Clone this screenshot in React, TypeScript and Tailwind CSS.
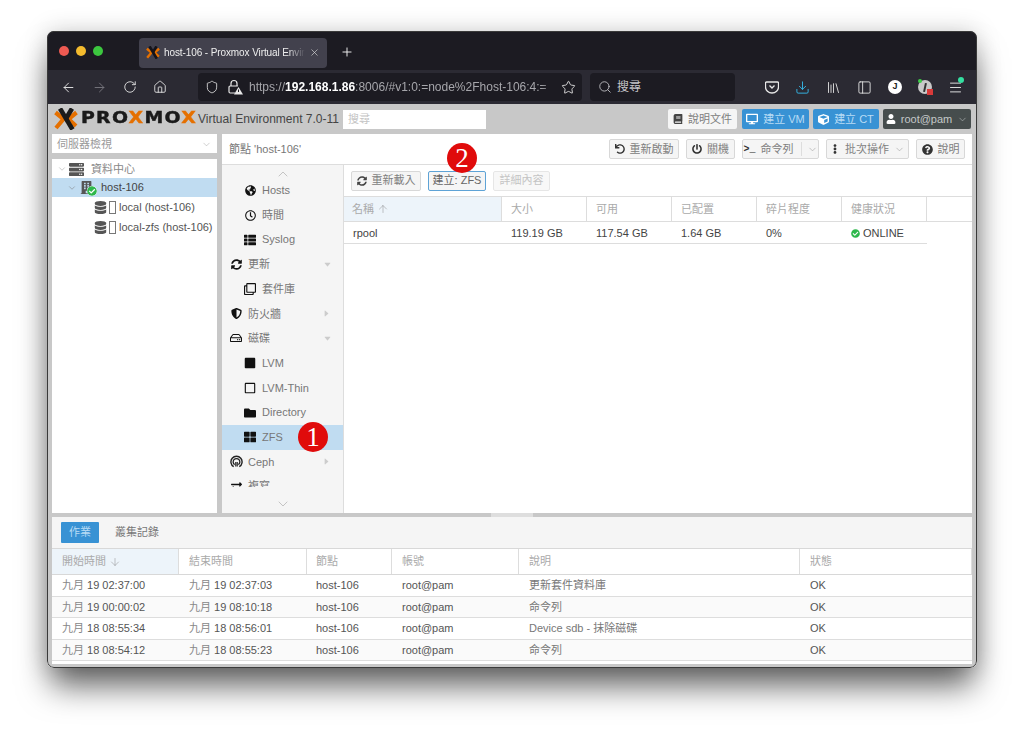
import React from "react";
import { ArrowDown, ArrowLeft, ArrowRight, ArrowUp, ChevronDown, ChevronUp, Download, Home, Library, Menu, PanelLeft, Plus, RotateCw, Search, Shield, Star, X } from "lucide-react";
import {
  FaBook, FaCheckCircle, FaCube, FaDatabase, FaDesktop, FaEllipsisV, FaExchangeAlt, FaFolder, FaGlobeAmericas, FaPowerOff, FaQuestionCircle,
  FaRegClock, FaRegClone, FaRegHdd, FaRegSquare, FaServer, FaShieldAlt, FaSquare, FaSyncAlt, FaThLarge, FaThList, FaUndo, FaUser, FaBuilding,
} from "react-icons/fa";
import { IoCaretDown, IoCaretForward } from "react-icons/io5";

const ProxLogoX = ({ w, h, dark }: { w: number; h: number; dark: string }) => (
  <svg width={w} height={h} viewBox="0 0 24 22" fill="none" className="shrink-0">
    <path d="M1.5 4.5 9.5 11 2 20" stroke="#e57000" strokeWidth="4.2" />
    <path d="M22.5 4.5 14.5 11 22 18" stroke="#e57000" strokeWidth="4.2" />
    <path d="M6 0.5 18.5 21.5" stroke={dark} strokeWidth="4.6" />
    <path d="M18 0.5 12 10.5" stroke={dark} strokeWidth="4.6" />
  </svg>
);

const CephIcon = () => (
  <svg width="13" height="13" viewBox="0 0 14 14" fill="none" stroke="#222" className="shrink-0">
    <path d="M4 12.6A6 6 0 1 1 10 12.6" strokeWidth="1.5" />
    <path d="M5 10.4A3.6 3.6 0 1 1 9 10.4" strokeWidth="1.4" />
    <path d="M6.2 12.5V7.5M7.8 12.5V7.5" strokeWidth="1.2" />
  </svg>
);

const LockWarn = () => (
  <svg width="16" height="16" viewBox="0 0 16 16" fill="none" className="shrink-0">
    <path d="M4 7V4.5a3 3 0 0 1 6 0V7" stroke="#e8e8e8" strokeWidth="1.2" />
    <path d="M8 14H3.2A1.2 1.2 0 0 1 2 12.8V8.2A1.2 1.2 0 0 1 3.2 7h7.6" stroke="#e8e8e8" strokeWidth="1.2" />
    <path d="M11.5 8 16 15.5H7z" fill="#e8e8e8" />
    <path d="M11.5 10.5v2.5" stroke="#1c1b22" strokeWidth="1" />
  </svg>
);

const Marker = ({ n, className }: { n: string; className: string }) => (
  <div className={`absolute w-[30px] h-[30px] rounded-full bg-[#e00b0b] text-white flex items-center justify-center font-['Liberation_Serif',serif] text-[27px] leading-none z-10 ${className}`}>
    {n}
  </div>
);

const ToolBtn = ({ icon, label, w, chevron, split, disabled, focused }: { icon?: React.ReactNode; label: string; w: string; chevron?: boolean; split?: boolean; disabled?: boolean; focused?: boolean }) => (
  <button className={`${w} h-[20px] flex items-center justify-center gap-[5px] rounded-[2px] border text-[11px] ${focused ? "border-[#5ea3d6] bg-[#f5f5f5] text-[#666]" : disabled ? "border-[#e6e6e6] bg-[#f8f8f8] text-[#c4c4c4]" : "border-[#d8d8d8] bg-[#f5f5f5] text-[#808080]"}`}>
    {icon}
    <span>{label}</span>
    {split && <span className="h-[14px] w-px bg-[#ddd] ml-[2px]" />}
    {chevron && <ChevronDown size={11} strokeWidth={1.2} className="text-[#999]" />}
  </button>
);

const navItems: { icon: React.ReactNode; label: string; sub?: boolean; caret?: "down" | "right"; active?: boolean }[] = [
  { icon: <FaGlobeAmericas size={11} />, label: "Hosts", sub: true },
  { icon: <FaRegClock size={11} />, label: "時間", sub: true },
  { icon: <FaThList size={12} />, label: "Syslog", sub: true },
  { icon: <FaSyncAlt size={11} />, label: "更新", caret: "down" },
  { icon: <FaRegClone size={12} />, label: "套件庫", sub: true },
  { icon: <FaShieldAlt size={11} />, label: "防火牆", caret: "right" },
  { icon: <FaRegHdd size={12} />, label: "磁碟", caret: "down" },
  { icon: <FaSquare size={12} />, label: "LVM", sub: true },
  { icon: <FaRegSquare size={12} />, label: "LVM-Thin", sub: true },
  { icon: <FaFolder size={12} />, label: "Directory", sub: true },
  { icon: <FaThLarge size={12} />, label: "ZFS", sub: true, active: true },
  { icon: <CephIcon />, label: "Ceph", caret: "right" },
  { icon: <FaExchangeAlt size={11} />, label: "複寫" },
];

const diskCols = [
  { label: "名稱", value: "rpool", w: "w-[158px]", pl: "pl-[8px]", sorted: true },
  { label: "大小", value: "119.19 GB", w: "w-[85px]", pl: "pl-[9px]" },
  { label: "可用", value: "117.54 GB", w: "w-[85px]", pl: "pl-[9px]" },
  { label: "已配置", value: "1.64 GB", w: "w-[85px]", pl: "pl-[9px]" },
  { label: "碎片程度", value: "0%", w: "w-[85px]", pl: "pl-[9px]" },
  { label: "健康狀況", value: "ONLINE", w: "w-[85px]", pl: "pl-[9px]" },
];

const taskCols = [
  { label: "開始時間", w: "w-[127px]", pl: "pl-[10px]", sorted: true },
  { label: "結束時間", w: "w-[128px]", pl: "pl-[10px]" },
  { label: "節點", w: "w-[85px]", pl: "pl-[9px]" },
  { label: "帳號", w: "w-[127px]", pl: "pl-[10px]" },
  { label: "說明", w: "w-[281px]", pl: "pl-[10px]" },
  { label: "狀態", w: "flex-1", pl: "pl-[10px]" },
];

const tasks = [
  ["九月 19 02:37:00", "九月 19 02:37:03", "host-106", "root@pam", "更新套件資料庫", "OK"],
  ["九月 19 00:00:02", "九月 19 08:10:18", "host-106", "root@pam", "命令列", "OK"],
  ["九月 18 08:55:34", "九月 18 08:56:01", "host-106", "root@pam", "Device sdb - 抹除磁碟", "OK"],
  ["九月 18 08:54:12", "九月 18 08:55:23", "host-106", "root@pam", "命令列", "OK"],
];

export default function App() {
  return (
    <div className="w-[1024px] h-[731px] overflow-hidden bg-white pt-[31px] pl-[47px] font-['Liberation_Sans','Noto_Sans_CJK_TC',sans-serif] text-[11px] text-[#555]">
      <div className="relative w-[930px] h-[637px] flex flex-col rounded-[7px] overflow-hidden shadow-[0_22px_32px_-4px_rgba(0,0,0,0.6),0_0_24px_rgba(0,0,0,0.18)]">
        {/* tab strip */}
        <div className="h-[39px] shrink-0 bg-[#1c1b22] flex items-center text-[#f5f5f5]">
          <div className="flex gap-[7px] pl-[12px] w-[92px]">
            <span className="w-[10px] h-[10px] rounded-full bg-[#ee5a52]" />
            <span className="w-[10px] h-[10px] rounded-full bg-[#f4bb2e]" />
            <span className="w-[10px] h-[10px] rounded-full bg-[#3cc73f]" />
          </div>
          <div className="w-[188px] h-[30px] mt-[4px] rounded-[4px] bg-[#42414d] flex items-center pl-[7px] gap-[4px]">
            <ProxLogoX w={14} h={13} dark="#15141a" />
            <span className="w-[141px] pb-[1px] overflow-hidden whitespace-nowrap text-[10px] tracking-[-0.1px] text-[#eee] [mask-image:linear-gradient(to_right,black_88%,transparent)]">host-106 - Proxmox Virtual Environment</span>
            <X size={11} strokeWidth={1.4} className="text-[#ddd]" />
          </div>
          <Plus size={14} strokeWidth={1.6} className="ml-[13px] mt-[2px]" />
        </div>
        {/* url bar */}
        <div className="h-[34px] shrink-0 bg-[#2b2a33] flex items-center text-[#e8e8e8] pl-[14px]">
          <div className="flex items-center gap-[16px] w-[137px]">
            <ArrowLeft size={15} strokeWidth={1.5} />
            <ArrowRight size={15} strokeWidth={1.5} className="text-[#77767e]" />
            <RotateCw size={14} strokeWidth={1.5} />
            <Home size={14} strokeWidth={1.5} />
          </div>
          <div className="w-[384px] h-[28px] rounded-[4px] bg-[#1c1b22] flex items-center pl-[7px] pr-[6px]">
            <Shield size={14} strokeWidth={1.4} />
            <div className="ml-[8px]"><LockWarn /></div>
            <div className="ml-[6px] w-[310px] overflow-hidden whitespace-nowrap text-[12px] text-[#a6a6ab] [mask-image:linear-gradient(to_right,black_94%,transparent)]">
              https://<span className="text-white font-bold">192.168.1.86</span>:8006/#v1:0:=node%2Fhost-106:4:=
            </div>
            <Star size={15} strokeWidth={1.4} className="ml-auto" />
          </div>
          <div className="ml-[8px] w-[145px] h-[28px] rounded-[4px] bg-[#1c1b22] flex items-center pl-[8px] gap-[5px] text-[12px] text-[#c4c4c8]">
            <Search size={14} strokeWidth={1.5} />
            <span>搜尋</span>
          </div>
          <div className="ml-[30px] flex items-center gap-[16px]">
            <svg width="14" height="14" viewBox="0 0 14 14" fill="none" stroke="#e8e8e8" strokeWidth="1.3"><path d="M1.5 2h11a1 1 0 0 1 1 1v4a6.5 6 0 0 1-13 0V3a1 1 0 0 1 1-1z" /><path d="M4.5 5.5 7 8l2.5-2.5" /></svg>
            <Download size={15} strokeWidth={1.5} className="text-[#35b8e8]" />
            <Library size={15} strokeWidth={1.4} />
            <PanelLeft size={15} strokeWidth={1.4} />
            <span className="w-[14px] h-[14px] rounded-full bg-white text-[#222] text-[9px] font-bold flex items-center justify-center">J</span>
            <div className="relative w-[14px] h-[14px] rounded-full bg-[#c9c9c9] flex justify-center">
              <span className="w-[2px] h-[9px] mt-[3px] bg-[#333] rotate-12" />
              <span className="absolute -top-[1px] left-0 w-[4px] h-[4px] rounded-full bg-[#3ecf4a]" />
              <span className="absolute -bottom-[1px] -right-[1px] w-[6px] h-[6px] bg-[#d93a3a]" />
            </div>
            <div className="relative">
              <Menu size={15} strokeWidth={1.5} />
              <span className="absolute -top-[3px] -right-[1px] w-[6px] h-[6px] rounded-full bg-[#34e0a1]" />
            </div>
          </div>
        </div>

        {/* proxmox page */}
        <div className="flex-1 min-h-0 flex flex-col bg-[#c8c8c8]">
          <div className="h-[30px] shrink-0 flex items-center pl-[7px] pr-[6px]">
            <ProxLogoX w={24} h={22} dark="#1a1a1a" />
            <div className="ml-[3px] w-[117px] whitespace-nowrap overflow-visible">
              <span className="inline-block origin-left scale-x-[1.26] font-['DejaVu_Sans',sans-serif] font-bold text-[15px] tracking-[1px] text-[#1a1a1a] leading-none [-webkit-text-stroke:0.4px]">
                PRO<span className="text-[#e57000]">X</span>MO<span className="text-[#e57000]">X</span>
              </span>
            </div>
            <span className="text-[12px] text-[#444] w-[145px] whitespace-nowrap">Virtual Environment 7.0-11</span>
            <div className="w-[143px] h-[19px] bg-white text-[#c4c4c4] pl-[5px] leading-[19px]">搜尋</div>
            <div className="ml-auto flex items-center gap-[4px]">
              <div className="w-[69px] h-[20px] bg-[#f5f5f5] rounded-[2px] flex items-center justify-center gap-[5px] text-[#808080] mr-[1px]"><FaBook size={10} className="text-[#444]" />說明文件</div>
              <div className="w-[67px] h-[20px] bg-[#3892d4] rounded-[2px] flex items-center justify-center gap-[5px] text-[#b8dcf5]"><FaDesktop size={12} className="text-white" />建立 VM</div>
              <div className="w-[66px] h-[20px] bg-[#3892d4] rounded-[2px] flex items-center justify-center gap-[5px] text-[#b8dcf5]"><FaCube size={11} className="text-white" />建立 CT</div>
              <div className="w-[88px] h-[20px] bg-[#464d4d] rounded-[2px] flex items-center justify-center gap-[5px] text-[#c4c8c8]"><FaUser size={10} className="text-white" />root@pam<ChevronDown size={11} strokeWidth={1.2} /></div>
            </div>
          </div>

          <div className="h-[379px] shrink-0 flex pl-[5px] pr-[5px] gap-[5px]">
            {/* tree */}
            <div className="w-[165px] flex flex-col gap-[6px]">
              <div className="h-[19px] bg-white flex items-center justify-between pt-[1px] pl-[5px] pr-[5px] text-[#999]">
                <span>伺服器檢視</span>
                <ChevronDown size={11} strokeWidth={1} />
              </div>
              <div className="flex-1 bg-white text-[#555]">
                <div className="h-[19px] pt-[1px] flex items-center pl-[5px] gap-[2px] text-[#888]">
                  <ChevronDown size={10} strokeWidth={1.2} className="text-[#999]" />
                  <FaServer size={15} className="text-[#555]" />
                  <span className="ml-[5px]">資料中心</span>
                </div>
                <div className="h-[19px] flex items-center pl-[15px] bg-[#c0dcf1]">
                  <ChevronDown size={10} strokeWidth={1.2} className="text-[#777]" />
                  <div className="relative ml-[3px] w-[17px]">
                    <FaBuilding size={13} className="text-[#555]" />
                    <FaCheckCircle size={10} className="absolute -bottom-[2px] right-0 text-[#2eb84c] bg-white rounded-full" />
                  </div>
                  <span className="ml-[4px] text-[#444]">host-106</span>
                </div>
                {["local (host-106)", "local-zfs (host-106)"].map((name) => (
                  <div key={name} className="h-[20px] flex items-center pl-[42px] gap-[2px] whitespace-nowrap">
                    <FaDatabase size={13} className="text-[#555] shrink-0" />
                    <span className="w-[7px] h-[13px] border border-[#777] shrink-0" />
                    <span className="ml-[1px]">{name}</span>
                  </div>
                ))}
              </div>
            </div>

            {/* node panel */}
            <div className="flex-1 flex flex-col bg-white relative">
              <div className="h-[31px] shrink-0 border-b border-[#ddd] flex items-center pl-[7px] pr-[7px]">
                <span className="text-[#777]">節點 'host-106'</span>
                <div className="ml-auto flex gap-[7px]">
                  <ToolBtn w="w-[70px]" icon={<FaUndo size={10} className="text-[#333]" />} label="重新啟動" />
                  <ToolBtn w="w-[49px]" icon={<FaPowerOff size={10} className="text-[#333]" />} label="關機" />
                  <ToolBtn w="w-[77px]" icon={<span className="font-['Liberation_Mono',monospace] text-[#333] text-[10px] font-bold">&gt;_</span>} label="命令列" split chevron />
                  <ToolBtn w="w-[83px]" icon={<FaEllipsisV size={10} className="text-[#333]" />} label="批次操作" chevron />
                  <ToolBtn w="w-[49px]" icon={<FaQuestionCircle size={11} className="text-[#333]" />} label="說明" />
                </div>
              </div>
              <div className="flex-1 min-h-0 flex">
                <div className="w-[122px] shrink-0 border-r border-[#ddd] bg-[#f5f5f5] flex flex-col overflow-hidden relative">
                  <div className="h-[13px] shrink-0 flex justify-center pt-[1px] text-[#aaa]"><ChevronUp size={16} strokeWidth={1} /></div>
                  {navItems.map((item) => (
                    <div key={item.label} className={`h-[24.7px] shrink-0 flex items-center text-[#777] ${item.sub ? "pl-[21px]" : "pl-[7px]"} ${item.active ? "bg-[#c0dcf1]" : ""}`}>
                      <span className="w-[14px] text-[#111] flex justify-center">{item.icon}</span>
                      <span className="ml-[5px]">{item.label}</span>
                      {item.caret === "down" && <IoCaretDown size={9} className="ml-auto mr-[11px] text-[#ccc]" />}
                      {item.caret === "right" && <IoCaretForward size={9} className="ml-auto mr-[12px] text-[#ccc]" />}
                    </div>
                  ))}
                  <div className="absolute bottom-0 inset-x-0 h-[26px] bg-[#f5f5f5] flex justify-center items-end pb-[1px] text-[#aaa]"><ChevronDown size={16} strokeWidth={1} /></div>
                </div>
                <div className="flex-1 flex flex-col min-w-0">
                  <div className="h-[31px] shrink-0 flex items-center pl-[7px] gap-[7px]">
                    <ToolBtn w="w-[70px]" icon={<FaSyncAlt size={10} className="text-[#444]" />} label="重新載入" />
                    <ToolBtn w="w-[58px]" label="建立: ZFS" focused />
                    <ToolBtn w="w-[57px]" label="詳細內容" disabled />
                  </div>
                  <div className="h-[26px] shrink-0 flex border-y border-[#ddd] text-[#aaa]">
                    {diskCols.map((c) => (
                      <div key={c.label} className={`${c.w} ${c.pl} shrink-0 border-r border-[#ddd] flex items-center gap-[3px] ${c.sorted ? "bg-[#edf4fa]" : ""}`}>
                        {c.label}
                        {c.sorted && <ArrowUp size={12} strokeWidth={1} className="text-[#888]" />}
                      </div>
                    ))}
                  </div>
                  <div className="h-[22px] pt-[2px] w-[583px] flex items-center border-b border-[#ddd] text-[#444]">
                    {diskCols.map((c) => (
                      <div key={c.label} className={`${c.w} shrink-0 pl-[9px] flex items-center gap-[3px]`}>
                        {c.value === "ONLINE" && <FaCheckCircle size={9} className="text-[#2eb84c]" />}
                        {c.value}
                      </div>
                    ))}
                  </div>
                </div>
              </div>
              <Marker n="1" className="left-[76px] top-[288px]" />
              <Marker n="2" className="left-[225px] top-[9px]" />
            </div>
          </div>

          {/* splitter */}
          <div className="h-[4px] shrink-0 flex justify-center"><div className="w-[42px] h-[4px] bg-[#dedede]" /></div>

          {/* task log */}
          <div className="flex-1 min-h-0 mx-[5px] bg-[#f5f5f5] flex flex-col">
            <div className="h-[31px] shrink-0 flex items-center pl-[9px]">
              <div className="w-[38px] h-[21px] bg-[#3892d4] rounded-[1px] text-[#b8dcf5] flex items-center justify-center">作業</div>
              <span className="ml-[16px] text-[#777]">叢集記錄</span>
            </div>
            <div className="h-[27px] shrink-0 flex bg-white border-y border-[#d8d8d8] text-[#aaa]">
              {taskCols.map((c) => (
                <div key={c.label} className={`${c.w} ${c.pl} shrink-0 border-r border-[#ddd] flex items-center gap-[3px] ${c.sorted ? "bg-[#edf4fa]" : ""}`}>
                  {c.label}
                  {c.sorted && <ArrowDown size={12} strokeWidth={1} className="text-[#888]" />}
                </div>
              ))}
            </div>
            {tasks.map((row, i) => (
              <div key={row[0]} className={`h-[21.5px] shrink-0 flex items-center border-b border-[#ddd] text-[#555] ${i % 2 ? "bg-[#fafafa]" : "bg-white"}`}>
                {taskCols.map((c, j) => (
                  <div key={c.label} className={`${c.w} ${c.pl} shrink-0 whitespace-nowrap ${j === 4 ? "text-[#777]" : ""}`}>
                    {j < 2 ? (<><span className="text-[#888]">九月</span>{row[j].slice(2)}</>) : row[j]}
                  </div>
                ))}
              </div>
            ))}
            <div className="h-[3px] shrink-0 bg-white" />
          </div>
          <div className="h-[4px] shrink-0" />
        </div>
        <div className="absolute inset-0 rounded-[7px] border border-[#3a3a3a] pointer-events-none" />
      </div>
    </div>
  );
}
